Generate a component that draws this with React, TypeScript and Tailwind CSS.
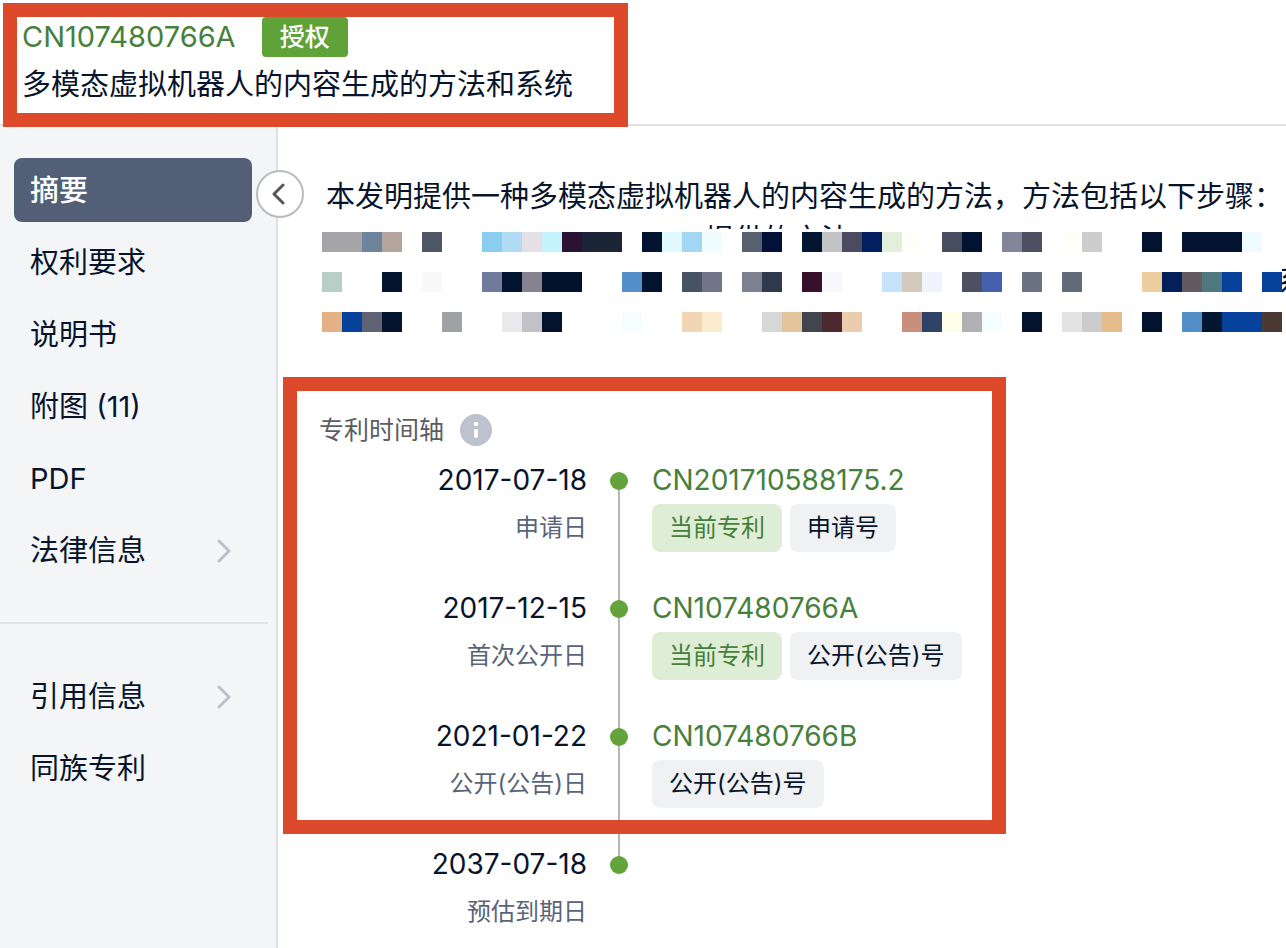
import { Fragment } from "react";

const timeline = [
  { date: "2017-07-18", label: "申请日", number: "CN201710588175.2", current: true, tag: "申请号" },
  { date: "2017-12-15", label: "首次公开日", number: "CN107480766A", current: true, tag: "公开(公告)号" },
  { date: "2021-01-22", label: "公开(公告)日", number: "CN107480766B", current: false, tag: "公开(公告)号" },
  { date: "2037-07-18", label: "预估到期日" },
];

const primaryNav = [
  { label: "摘要", active: true },
  { label: "权利要求" },
  { label: "说明书" },
  { label: "附图 (11)" },
  { label: "PDF" },
  { label: "法律信息", expandable: true },
];

const secondaryNav = [{ label: "引用信息", expandable: true }, { label: "同族专利" }];

// [column, colour, span] on a 20px grid, one list per row
const mosaic: [number, string, number][][] = [
  [
    [0, "#a5a5a7", 2], [2, "#6d849c", 1], [3, "#b3a59c", 1], [5, "#4e5566", 1],
    [8, "#8acdee", 1], [9, "#b2dbf5", 1], [10, "#e5e0e5", 1], [11, "#c5f3fb", 1], [12, "#2c1232", 1], [13, "#1b2537", 2],
    [16, "#02142f", 1], [17, "#dff9ff", 1], [18, "#a1d7f2", 1], [19, "#effdff", 1],
    [21, "#576071", 1], [22, "#021138", 1], [24, "#02162f", 1], [25, "#c2c3c5", 1], [26, "#4b4a60", 1], [27, "#02205f", 1], [28, "#e2efdb", 1], [29, "#fdfff9", 1],
    [31, "#474d60", 1], [32, "#021232", 1], [34, "#81869a", 1], [35, "#504f62", 1], [37, "#fffffa", 1], [38, "#cdcdce", 1],
    [41, "#02132f", 1], [43, "#02142f", 3], [46, "#effcff", 1],
  ],
  [
    [0, "#b7cfc6", 1], [3, "#02142e", 1], [5, "#f9f9fa", 1], [8, "#707b9b", 1], [9, "#02142f", 1], [10, "#84838f", 1], [11, "#02122d", 2],
    [15, "#558fcb", 1], [16, "#02142e", 1], [18, "#455363", 1], [19, "#707688", 1], [21, "#7c808f", 1], [22, "#30394e", 1],
    [24, "#35112b", 1], [25, "#f8f7fb", 1], [28, "#c5e4fb", 1], [29, "#d3c9bc", 1], [30, "#f0f3fc", 1],
    [32, "#4d5060", 1], [33, "#4560ad", 1], [35, "#6b7282", 1], [37, "#636b78", 1],
    [41, "#edcf9f", 1], [42, "#02215b", 1], [43, "#625961", 1], [44, "#4d7880", 1], [45, "#06419b", 1], [47, "#06419b", 1],
  ],
  [
    [0, "#e3b184", 1], [1, "#06419b", 1], [2, "#5f6373", 1], [3, "#02142e", 1], [6, "#a0a1a5", 1], [9, "#e9e9eb", 1], [10, "#c0c2c8", 1], [11, "#02142d", 1],
    [15, "#f4fdff", 1], [18, "#f1d5b5", 1], [19, "#fcebcc", 1], [22, "#d6d7d7", 1], [23, "#e4c49b", 1], [24, "#41454e", 1], [25, "#4c292f", 1], [26, "#e9cdac", 1],
    [29, "#c8907c", 1], [30, "#2d4266", 1], [31, "#fffeea", 1], [32, "#b1b0b5", 1], [33, "#f4fdff", 1], [35, "#02142c", 1],
    [37, "#e3e3e3", 1], [38, "#cbcccd", 1], [39, "#e7bc8d", 1], [41, "#02132e", 1], [43, "#518fc6", 1], [44, "#02162f", 1], [45, "#06419b", 2], [47, "#4b3934", 1],
  ],
];

function Chevron({ left = false, className = "" }: { left?: boolean; className?: string }) {
  return (
    <svg viewBox="0 0 14 24" fill="none" stroke="currentColor" strokeLinecap="round" strokeLinejoin="round" className={className} aria-hidden="true">
      <path d={left ? "M12 3 3 12l9 9" : "M2 2l10 10L2 22"} strokeWidth="3" />
    </svg>
  );
}

function NavItem({ label, active, expandable }: { label: string; active?: boolean; expandable?: boolean }) {
  return (
    <a
      href="#"
      className={`flex h-16 items-center justify-between rounded-lg pt-[2px] pr-5 pl-4 text-[29px] leading-10 ${
        active ? "bg-[#525f76] font-medium text-white" : ""
      }`}
    >
      {label}
      {expandable ? <Chevron className="h-6 w-4 text-[#bdc0c6]" /> : null}
    </a>
  );
}

function Mosaic() {
  return (
    <svg width="960" height="100" className="relative block max-w-none shrink-0 bg-white" shapeRendering="crispEdges" aria-hidden="true">
      {mosaic.map((cells, row) => (
        <Fragment key={row}>
          {cells.map(([column, fill, span]) => (
            <rect key={column} x={column * 20} y={row * 40} width={span * 20} height="20" fill={fill} />
          ))}
        </Fragment>
      ))}
    </svg>
  );
}

export default function App() {
  return (
    <div className="relative flex min-h-screen flex-col overflow-x-hidden bg-white font-['Inter','Noto_Sans_CJK_SC',sans-serif] text-[#07142b]">
      <header className="relative h-[126px] border-b-2 border-[#dfe1e4] pt-[17px] pl-[22px]">
        <div className="flex h-10 items-center gap-[26px]">
          <a href="#" className="text-[29px] leading-10 text-[#47803a]">CN107480766A</a>
          <span className="rounded bg-[#5fa238] px-[18px] text-[25px] leading-10 font-medium text-white">授权</span>
        </div>
        <h1 className="mt-2 text-[29px] leading-10">多模态虚拟机器人的内容生成的方法和系统</h1>
        <div className="pointer-events-none absolute top-[3px] left-[3px] z-10 h-[124px] w-[625px] border-14 border-[#dc492b]" />
      </header>

      <div className="flex flex-1">
        <aside className="relative w-[278px] shrink-0 border-r-2 border-[#dcdfe5] bg-[#f3f5f7] pt-8">
          <nav className="flex flex-col gap-2 pr-6 pl-[14px]">
            {primaryNav.map((item) => (
              <NavItem key={item.label} {...item} />
            ))}
          </nav>
          <hr className="mt-10 mr-2 mb-10 border-t-2 border-[#e1e3e6]" />
          <nav className="flex flex-col gap-2 pr-6 pl-[14px]">
            {secondaryNav.map((item) => (
              <NavItem key={item.label} {...item} />
            ))}
          </nav>
          <button
            type="button"
            aria-label="收起"
            className="absolute top-11 -right-7 flex size-12 items-center justify-center rounded-full border-2 border-[#b9bbbd] bg-white text-[#55575b]"
          >
            <Chevron left className="mr-1 h-6 w-[14px]" />
          </button>
        </aside>

        <main className="min-w-0 flex-1">
          <section className="overflow-hidden pt-[51px] pl-[44px]">
            <p className="pl-1 text-[29px] leading-10 whitespace-nowrap">
              本发明提供一种多模态虚拟机器人的内容生成的方法，方法包括以下步骤：
            </p>
            <div className="mt-[7px] mb-[3px] h-[5px] overflow-hidden pl-[383px] text-[29px] leading-8 whitespace-nowrap">
              提供的方法
            </div>
            <div className="flex h-[100px] overflow-hidden text-[29px]">
              <Mosaic />
              <span className="-ml-1 leading-[100px]">系</span>
            </div>
          </section>

          <section className="relative mt-[45px] ml-[5px] pt-[33px] pl-9">
            <div className="flex h-10 items-center gap-4">
              <h2 className="text-[25px] leading-10 text-[#5c5d60]">专利时间轴</h2>
              <svg viewBox="0 0 32 32" className="size-8" aria-hidden="true">
                <circle cx="16" cy="16" r="16" fill="#bec1ce" />
                <circle cx="16" cy="10" r="2.3" fill="white" />
                <rect x="14" y="15" width="4" height="9" rx="1.8" fill="white" />
              </svg>
            </div>
            <ol className="pt-[6px]">
              {timeline.map((event, index) => (
                <li key={event.date} className="flex h-32">
                  <div className="w-[268px] text-right">
                    <time className="block text-[28px] leading-12">{event.date}</time>
                    <p className="text-2xl leading-12 text-[#58647a]">{event.label}</p>
                  </div>
                  <div className="relative mx-[23px] w-[18px] shrink-0">
                    {index < timeline.length - 1 ? (
                      <span className="absolute top-6 left-2 h-full w-[2px] bg-[#b5b6b8]" />
                    ) : null}
                    <span className="absolute top-4 z-10 size-[18px] rounded-full bg-[#62a33b]" />
                  </div>
                  {event.number ? (
                    <div className="ml-[1px]">
                      <a href="#" className="block text-[28px] leading-12 text-[#47803a]">{event.number}</a>
                      <div className="flex gap-2 text-2xl leading-12">
                        {event.current ? (
                          <span className="rounded-lg bg-[#deeed6] px-[17px] text-[#47803a]">当前专利</span>
                        ) : null}
                        <span className="rounded-lg bg-[#eff1f3] px-[17px]">{event.tag}</span>
                      </div>
                    </div>
                  ) : null}
                </li>
              ))}
            </ol>
            <div className="pointer-events-none absolute top-0 left-0 z-20 h-[457px] w-[723px] border-14 border-[#dc492b]" />
          </section>
        </main>
      </div>
    </div>
  );
}
